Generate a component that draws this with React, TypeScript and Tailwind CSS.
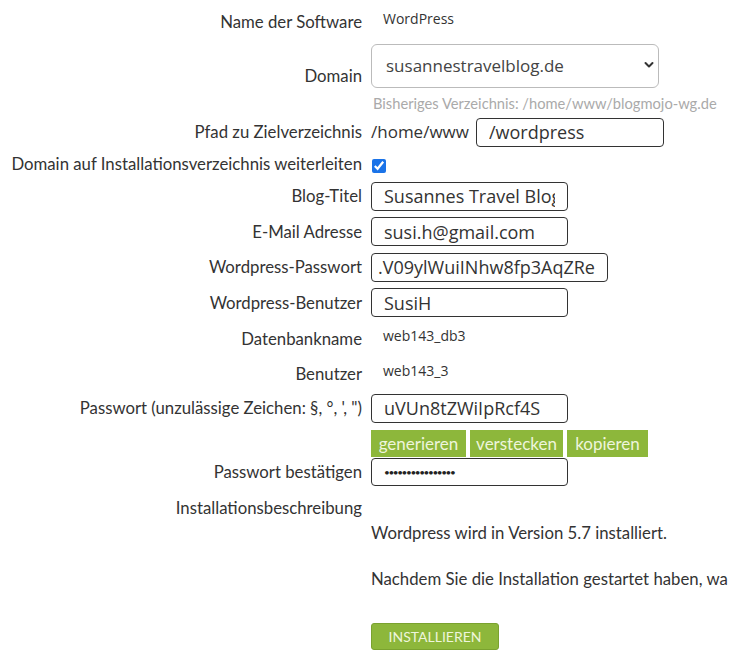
import React from 'react';

const labelFont = { fontFamily: 'Lato, "Noto Sans", sans-serif' };
const valueFont = { fontFamily: '"Open Sans", sans-serif' };

function Row({ label, h, labelClass = '', children }: { label?: string; h: string; labelClass?: string; children?: React.ReactNode }) {
  return (
    <div className={`flex ${h}`}>
      <div className={`w-[362px] shrink-0 text-right text-[16.75px] text-[#333] flex items-center justify-end whitespace-nowrap ${labelClass}`}>{label}</div>
      <div className="ml-[9px] flex items-center flex-1 min-w-0">{children}</div>
    </div>
  );
}

function TextBox({ value, w }: { value: string; w: string }) {
  return (
    <input
      readOnly
      value={value}
      style={valueFont}
      className={`${w} h-[29px] border-[1.5px] border-[#333] rounded-[4px] px-[12px] text-[18px] text-[#333] bg-white outline-none`}
    />
  );
}

function GreenButton({ label, w }: { label: string; w: string }) {
  return <span className={`${w} h-[27px] bg-[#8db73b] text-[#eef5dc] text-[17px] leading-[27px] text-center`}>{label}</span>;
}

export default function App() {
  return (
    <div className="w-[730px] h-[664px] bg-white overflow-hidden text-[#333]" style={labelFont}>
      <Row label="Name der Software" h="h-[44px]">
        <span className="text-[14px] -mt-2 ml-[12px]" style={valueFont}>WordPress</span>
      </Row>
      <Row label="Domain" h="h-[44px]" labelClass="!items-end">
        <div className="relative w-[288px] h-[44px]">
          <select
            className="appearance-none w-full h-full border border-[#bbb] rounded-[6px] pl-[14px] text-[17px] text-[#444] bg-white outline-none"
            style={valueFont}
            defaultValue="susannestravelblog.de"
          >
            <option>susannestravelblog.de</option>
          </select>
          <svg className="absolute right-[5px] top-[17px] pointer-events-none" width="10" height="8" viewBox="0 0 10 8">
            <path d="M1.5 2 L5 5.5 L8.5 2" fill="none" stroke="#333" strokeWidth="2" strokeLinecap="round" strokeLinejoin="round" />
          </svg>
        </div>
      </Row>
      <Row h="h-[26px]">
        <span className="text-[14.7px] text-[#aaa] pt-[4px] ml-[2px] whitespace-nowrap">Bisheriges Verzeichnis: /home/www/blogmojo-wg.de</span>
      </Row>
      <Row label="Pfad zu Zielverzeichnis" h="h-[36px]">
        <span className="text-[17px] mr-[7px]" style={valueFont}>/home/www</span>
        <TextBox value="/wordpress" w="w-[188px]" />
      </Row>
      <Row label="Domain auf Installationsverzeichnis weiterleiten" h="h-[28px]">
        <input type="checkbox" checked readOnly className="w-[14px] h-[14px] ml-[1px] mt-[3px] accent-[#1a73e8]" />
      </Row>
      <Row label="Blog-Titel" h="h-[36px]">
        <TextBox value="Susannes Travel Blog" w="w-[197px]" />
      </Row>
      <Row label="E-Mail Adresse" h="h-[35px]">
        <TextBox value="susi.h@gmail.com" w="w-[197px]" />
      </Row>
      <Row label="Wordpress-Passwort" h="h-[36px]">
        <TextBox value=".V09ylWuiINhw8fp3AqZRe" w="w-[237px] !px-[6px]" />
      </Row>
      <Row label="Wordpress-Benutzer" h="h-[35px]">
        <TextBox value="SusiH" w="w-[197px]" />
      </Row>
      <Row label="Datenbankname" h="h-[38px]">
        <span className="text-[14px] -mt-2 ml-[12px]" style={valueFont}>web143_db3</span>
      </Row>
      <Row label="Benutzer" h="h-[32px]">
        <span className="text-[14px] -mt-2 ml-[12px]" style={valueFont}>web143_3</span>
      </Row>
      <Row label="Passwort (unzulässige Zeichen: §, °, ', &quot;)" h="h-[36px]">
        <TextBox value="uVUn8tZWiIpRcf4S" w="w-[197px]" />
      </Row>
      <Row h="h-[32px]">
        <div className="flex gap-[4px] items-start h-full pt-[4px]">
          <GreenButton label="generieren" w="w-[95px]" />
          <GreenButton label="verstecken" w="w-[93px]" />
          <GreenButton label="kopieren" w="w-[81px]" />
        </div>
      </Row>
      <Row label="Passwort bestätigen" h="h-[28px]">
        <div className="w-[197px] h-[28px] border-[1.5px] border-[#333] rounded-[4px] px-[12px] flex items-center text-[10px] tracking-[-1.4px] text-[#222]">
          ••••••••••••••••
        </div>
      </Row>
      <Row label="Installationsbeschreibung" h="h-[36px]" labelClass="pt-[8px]" />
      <div className="ml-[371px] flex flex-col text-[16.75px] whitespace-nowrap">
        <p className="leading-[22px]">Wordpress wird in Version 5.7 installiert.</p>
        <p className="mt-[24px] leading-[22px]">Nachdem Sie die Installation gestartet haben, wa</p>
        <div className="mt-[33px]">
          <span className="inline-block w-[128px] h-[27px] rounded-[3px] bg-[#8db73b] border border-[#7aa22f] text-[#eef5dc] text-[14px] leading-[25px] text-center">INSTALLIEREN</span>
        </div>
      </div>
    </div>
  );
}
